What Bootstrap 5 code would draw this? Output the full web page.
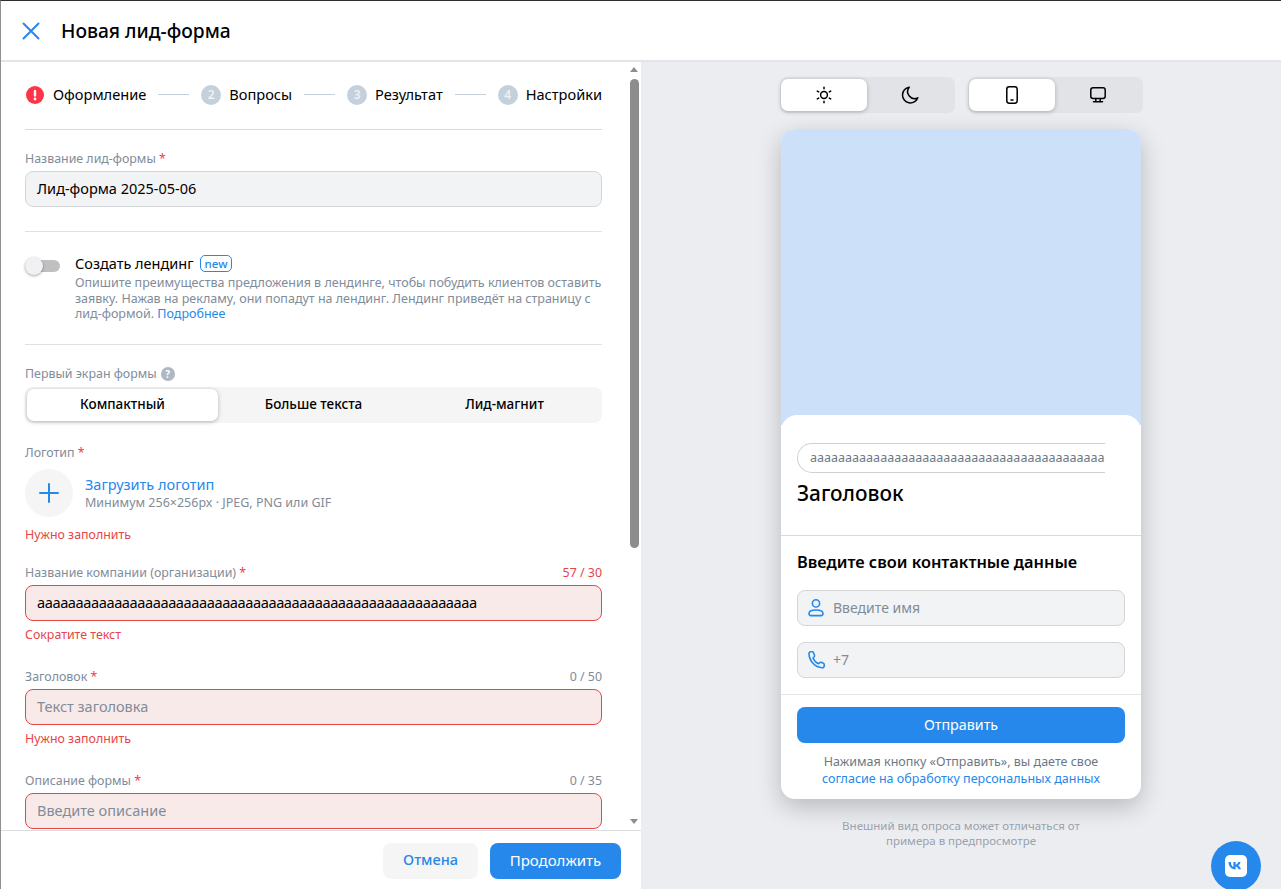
<!doctype html>
<html lang="ru">
<head>
<meta charset="utf-8">
<title>Новая лид-форма</title>
<link href="https://cdn.jsdelivr.net/npm/bootstrap@5.3.0/dist/css/bootstrap.min.css" rel="stylesheet">
<style>
  html, body { height: 100%; overflow: hidden; }
  body { font-family: "Noto Sans", sans-serif; color: #000; background: #fff; border-top: 1px solid #2c2d2e; border-left: 1px solid #8f8f8f; font-size: 14px; }
  .app-shell { height: 888px; }
  .top-bar { height: 61px; border-bottom: 2px solid #e3e4e7; padding-left: 20px; }
  .top-bar h1 { font-size: 19.2px; font-weight: 500; margin: 0 0 0 20px; line-height: 24px; }
  .left-pane { width: 640px; flex: none; }
  .scroll-area { height: 768px; overflow: hidden; position: relative; }
  .scroll-inner { width: 577px; margin-left: 24px; }
  .fake-track { position: absolute; top: 0; right: 0; width: 13px; height: 100%; }
  .fake-thumb { position: absolute; left: 2px; top: 17px; width: 9px; height: 469px; border-radius: 5px; background: #8d8d8d; }
  .arrow-up, .arrow-down { position: absolute; left: 2px; width: 0; height: 0; border-left: 4.5px solid transparent; border-right: 4.5px solid transparent; }
  .arrow-up { top: 5px; border-bottom: 5px solid #8d8d8d; }
  .arrow-down { bottom: 6px; border-top: 5px solid #8d8d8d; }
  .steps-row { height: 68px; padding-bottom: 2px; border-bottom: 1px solid #d9dade; font-size: 14.6px; }
  .step-alert { margin-left: 1px; margin-right: 9px; flex: none; }
  .step-num { width: 20px; height: 20px; border-radius: 50%; background: #c4d0dc; color: #eef1f5; font-size: 12px; font-weight: 600; display: flex; align-items: center; justify-content: center; margin-right: 8px; flex: none; }
  .step-line { flex: 1; height: 1px; background: #c4d0dc; margin: 0 12px; }
  .sec-name { height: 102px; padding-top: 21px; border-bottom: 1px solid #dde0e5; }
  .sec-landing { height: 113px; padding-top: 23px; border-bottom: 1px solid #dde0e5; }
  .fld-label { font-size: 12.4px; line-height: 16px; color: #818c99; margin-bottom: 4px; }
  .lbl-first { margin-top: 21px; margin-bottom: 5px; }
  .lbl-logo { margin-top: 22px; margin-bottom: 8px; }
  .lbl-company { margin-top: 22px; }
  .lbl-next { margin-top: 26px; }
  .req { color: #ff3347; }
  .cnt-red { color: #e64646; }
  .fld-box { height: 36px; border: 1px solid #d3d5d9; border-radius: 8px; background: #f2f3f5; padding: 0 11px; font-size: 14.5px; line-height: 33px; white-space: nowrap; overflow: hidden; }
  .fld-bad { background: #f9eaea; border-color: #e64646; }
  .tight-a { letter-spacing: -.42px; }
  .ph-text { color: #818c99; }
  .err-text { font-size: 12.4px; line-height: 16px; color: #e64646; margin-top: 6px; }
  .err-logo { margin-top: 10px; }
  .mini-toggle { width: 35px; height: 12px; border-radius: 6px; background: #c0c0c0; position: relative; flex: none; margin-top: 5px; margin-right: 15px; }
  .mini-toggle::before { content: ""; position: absolute; left: 0; top: -3px; width: 18px; height: 18px; border-radius: 50%; background: #f1f1f3; box-shadow: 0 1px 3px rgba(0,0,0,.35); }
  .toggle-title { font-size: 14.5px; line-height: 18px; margin-top: -1px; margin-bottom: 3px; }
  .new-tag { border: 1px solid #2688eb; color: #2688eb; border-radius: 5px; font-size: 11.5px; line-height: 15px; padding: 0 4px; margin-left: 6px; font-weight: 500; }
  .hint-text { font-size: 12.5px; line-height: 15.6px; color: #818c99; }
  .blue-link { color: #2688eb; text-decoration: none; }
  .help-dot { width: 14px; height: 14px; border-radius: 50%; background: #aeb7c2; color: #fff; font-size: 10px; font-weight: 700; display: inline-flex; align-items: center; justify-content: center; margin-left: 4px; }
  .seg-wrap { height: 36px; background: #f5f5f5; border-radius: 8px; padding: 2px; }
  .seg-item { flex: 1; display: flex; align-items: center; justify-content: center; font-size: 13.5px; font-weight: 500; border-radius: 7px; padding-bottom: 2px; }
  .seg-on { background: #fff; box-shadow: 0 1px 4px rgba(0,0,0,.28); }
  .add-circle { width: 48px; height: 48px; border-radius: 50%; background: #f5f5f5; flex: none; margin-right: 12px; }
  .upload-link { font-size: 14.5px; line-height: 18px; }
  .upload-hint { line-height: 17px; margin-top: 1px; }
  .foot-bar { height: 59px; border-top: 1px solid #dcdde0; padding: 2px 20px 0 0; gap: 12px; }
  .act-btn { height: 36px; border-radius: 8px; font-size: 14.5px; font-weight: 500; display: flex; align-items: center; justify-content: center; padding-bottom: 2px; }
  .act-gray { width: 95px; background: #f5f5f5; color: #2688eb; }
  .act-blue { width: 131px; background: #2688eb; color: #fff; font-weight: 400; font-size: 15px; }
  .right-pane { flex: 1; background: #ebedf1; position: relative; overflow: hidden; }
  .sw-row { padding-top: 15px; margin-left: 139px; gap: 13px; }
  .sw-group { width: 175px; height: 36px; background: #e1e3e7; border-radius: 7px; padding: 2px 1px; }
  .sw-item { width: 86px; height: 32px; display: flex; align-items: center; justify-content: center; border-radius: 7px; }
  .sw-on { background: #fff; box-shadow: 0 1px 4px rgba(0,0,0,.25); }
  .pv-card { width: 360px; height: 670px; margin: 16px 0 0 140px; border-radius: 14px; background: #fff; box-shadow: 0 8px 24px rgba(0,0,0,.22); overflow: hidden; }
  .pv-media { height: 296px; background: #cce0f9; }
  .pv-sheet { background: #fff; border-radius: 16px 16px 0 0; margin-top: -10px; position: relative; }
  .pv-top { height: 121px; padding: 28px 16px 0; border-bottom: 1px solid #d9dade; }
  .pv-chip { width: 308px; height: 30px; border: 1px solid #cfd1d5; border-right: 0; border-radius: 15px 0 0 15px; padding-left: 12px; font-size: 12.5px; line-height: 28px; color: #6d7885; overflow: hidden; white-space: nowrap; }
  .pv-title { font-size: 20.8px; font-weight: 500; line-height: 24px; margin-top: 8px; }
  .pv-form { height: 159px; padding: 15px 16px 0; border-bottom: 1px solid #e3e4e7; }
  .pv-sub { font-size: 16.35px; font-weight: 600; line-height: 22px; margin-bottom: 17px; }
  .pv-field { height: 36px; border: 1px solid #d3d5d9; border-radius: 8px; background: #f2f3f5; font-size: 14px; color: #818c99; padding-left: 9px; margin-bottom: 16px; }
  .pv-field svg { margin-right: 8px; flex: none; }
  .pv-field span { margin-bottom: 2px; }
  .pv-send { height: 36px; margin: 12px 16px 0; background: #2688eb; color: #fff; border-radius: 8px; font-size: 14.3px; font-weight: 400; }
  .pv-legal { font-size: 12.5px; line-height: 16.5px; color: #6d7885; text-align: center; margin-top: 11px; }
  .pv-note { font-size: 11.5px; line-height: 15px; color: #99a2ad; text-align: center; width: 360px; margin: 19px 0 0 140px; }
  .vk-float { position: absolute; left: 570px; top: 779px; width: 50px; height: 50px; border-radius: 50%; background: #2688eb; display: flex; align-items: center; justify-content: center; }
</style>
</head>
<body>
<div class="app-shell d-flex flex-column">
  <div class="top-bar d-flex align-items-center">
    <svg width="20" height="20" viewBox="0 0 20 20" fill="none" stroke="#2688eb" stroke-width="2" stroke-linecap="round"><path d="M2.5 2.5l15 15M17.5 2.5l-15 15"/></svg>
    <h1>Новая лид-форма</h1>
  </div>
  <div class="d-flex flex-grow-1">
    <div class="left-pane d-flex flex-column">
      <div class="scroll-area">
        <div class="scroll-inner">
          <div class="steps-row d-flex align-items-center">
            <svg class="step-alert" width="18" height="18" viewBox="0 0 18 18"><circle cx="9" cy="9" r="9" fill="#ff3347"/><rect x="7.8" y="3.8" width="2.4" height="6.8" rx="1.2" fill="#fff"/><circle cx="9" cy="13" r="1.4" fill="#fff"/></svg>
            <span>Оформление</span><div class="step-line"></div>
            <div class="step-num">2</div><span>Вопросы</span><div class="step-line"></div>
            <div class="step-num">3</div><span>Результат</span><div class="step-line"></div>
            <div class="step-num">4</div><span>Настройки</span>
          </div>

          <div class="sec-name">
            <div class="fld-label">Название лид-формы <span class="req">*</span></div>
            <div class="fld-box">Лид-форма 2025-05-06</div>
          </div>

          <div class="sec-landing d-flex">
            <div class="mini-toggle"></div>
            <div>
              <div class="toggle-title d-flex align-items-center">Создать лендинг <span class="new-tag">new</span></div>
              <div class="hint-text">Опишите преимущества предложения в лендинге, чтобы побудить клиентов оставить заявку. Нажав на рекламу, они попадут на лендинг. Лендинг приведёт на страницу с лид-формой. <a class="blue-link" href="#">Подробнее</a></div>
            </div>
          </div>

          <div class="fld-label lbl-first d-flex align-items-center">Первый экран формы <span class="help-dot">?</span></div>
          <div class="seg-wrap d-flex">
            <div class="seg-item seg-on">Компактный</div>
            <div class="seg-item">Больше текста</div>
            <div class="seg-item">Лид-магнит</div>
          </div>

          <div class="fld-label lbl-logo">Логотип <span class="req">*</span></div>
          <div class="d-flex align-items-center">
            <div class="add-circle d-flex align-items-center justify-content-center">
              <svg width="22" height="22" viewBox="0 0 22 22" stroke="#2688eb" stroke-width="2" stroke-linecap="round"><path d="M11 2v18M2 11h18"/></svg>
            </div>
            <div>
              <div class="blue-link upload-link">Загрузить логотип</div>
              <div class="hint-text upload-hint">Минимум 256×256px · JPEG, PNG или GIF</div>
            </div>
          </div>
          <div class="err-text err-logo">Нужно заполнить</div>

          <div class="d-flex justify-content-between fld-label lbl-company">
            <span>Название компании (организации) <span class="req">*</span></span><span class="cnt-red">57 / 30</span>
          </div>
          <div class="fld-box fld-bad"><span class="tight-a">aaaaaaaaaaaaaaaaaaaaaaaaaaaaaaaaaaaaaaaaaaaaaaaaaaaaaaaaa</span></div>
          <div class="err-text">Сократите текст</div>

          <div class="d-flex justify-content-between fld-label lbl-next">
            <span>Заголовок <span class="req">*</span></span><span>0 / 50</span>
          </div>
          <div class="fld-box fld-bad"><span class="ph-text">Текст заголовка</span></div>
          <div class="err-text">Нужно заполнить</div>

          <div class="d-flex justify-content-between fld-label lbl-next">
            <span>Описание формы <span class="req">*</span></span><span>0 / 35</span>
          </div>
          <div class="fld-box fld-bad"><span class="ph-text">Введите описание</span></div>
        </div>
        <div class="fake-track">
          <div class="arrow-up"></div>
          <div class="fake-thumb"></div>
          <div class="arrow-down"></div>
        </div>
      </div>
      <div class="foot-bar d-flex align-items-center justify-content-end">
        <div class="act-btn act-gray">Отмена</div>
        <div class="act-btn act-blue">Продолжить</div>
      </div>
    </div>

    <div class="right-pane">
      <div class="sw-row d-flex">
        <div class="sw-group d-flex">
          <div class="sw-item sw-on">
            <svg width="20" height="20" viewBox="0 0 20 20" fill="none" stroke="#000" stroke-width="1.5" stroke-linecap="round"><circle cx="10" cy="10" r="3.4"/><path d="M10 2.2v1.6M10 16.2v1.6M3.3 6.1l1.4.8M15.3 13.1l1.4.8M3.3 13.9l1.4-.8M15.3 6.9l1.4-.8"/></svg>
          </div>
          <div class="sw-item">
            <svg width="20" height="20" viewBox="0 0 20 20" fill="none" stroke="#000" stroke-width="1.5" stroke-linejoin="round"><path d="M9.2 2.2a7.9 7.9 0 1 0 8.6 10.6 7 7 0 0 1-8.6-10.6z"/></svg>
          </div>
        </div>
        <div class="sw-group d-flex">
          <div class="sw-item sw-on">
            <svg width="20" height="20" viewBox="0 0 20 20" fill="none" stroke="#000" stroke-width="1.5"><rect x="4.8" y="1.8" width="10.4" height="16.4" rx="2.4"/><path d="M9 14.9h2" stroke-linecap="round"/></svg>
          </div>
          <div class="sw-item">
            <svg width="20" height="20" viewBox="0 0 20 20" fill="none" stroke="#000" stroke-width="1.5" stroke-linecap="round"><rect x="2.8" y="2.8" width="14.4" height="10.6" rx="2.2"/><path d="M7.8 13.6v3M12.2 13.6v3M5.5 16.8h9"/></svg>
          </div>
        </div>
      </div>

      <div class="pv-card">
        <div class="pv-media"></div>
        <div class="pv-sheet">
          <div class="pv-top">
            <div class="pv-chip">aaaaaaaaaaaaaaaaaaaaaaaaaaaaaaaaaaaaaaaaaaaaaaaaaaaaaaaaa</div>
            <div class="pv-title">Заголовок</div>
          </div>
          <div class="pv-form">
            <div class="pv-sub">Введите свои контактные данные</div>
            <div class="pv-field d-flex align-items-center">
              <svg width="18" height="20" viewBox="0 0 18 20" fill="none" stroke="#2688eb" stroke-width="1.6"><circle cx="9" cy="5.4" r="3.6"/><path d="M2 15.6c0-2.2 3-3.6 7-3.6s7 1.4 7 3.6c0 1.3-.8 2-2 2H4c-1.2 0-2-.7-2-2z"/></svg>
              <span>Введите имя</span>
            </div>
            <div class="pv-field d-flex align-items-center">
              <svg width="18" height="20" viewBox="0 0 18 20" fill="none" stroke="#2688eb" stroke-width="1.6" stroke-linejoin="round"><path d="M2 3.6c0-1 .9-1.8 1.8-1.8h1.5c.6 0 1 .4 1.2.9l1 2.6c.2.5 0 1-.3 1.4L6 8c1 2.6 3 4.700 5.600 5.800l1.200-1.200c.4-.4.9-.5 1.400-.3l2.200 1c.5.2.8.7.8 1.200v1.500c0 1-.9 1.900-1.900 1.800C7.800 17.300 2.300 11 2 3.600z"/></svg>
              <span>+7</span>
            </div>
          </div>
          <div class="pv-send d-flex align-items-center justify-content-center">Отправить</div>
          <div class="pv-legal">Нажимая кнопку «Отправить», вы даете свое<br><a class="blue-link" href="#">согласие на обработку персональных данных</a></div>
        </div>
      </div>
      <div class="pv-note">Внешний вид опроса может отличаться от<br>примера в предпросмотре</div>
      <div class="vk-float">
        <svg width="22" height="22" viewBox="0 0 22 22"><rect width="22" height="22" rx="5" fill="#fff"/><path d="M3.5 7h2.3c.1 3 1.500 4.500 2.600 4.900V7h2.200v2.700c1.100-.1 2.300-1.300 2.700-2.700h2.200c-.3 1.700-1.600 3-2.500 3.500.9.400 2.400 1.500 3 3.800h-2.400c-.5-1.500-1.700-2.600-3-2.800v2.800h-.3C6.500 14.300 3.600 11.500 3.500 7z" fill="#2688eb"/></svg>
      </div>
    </div>
  </div>
</div>
</body>
</html>
